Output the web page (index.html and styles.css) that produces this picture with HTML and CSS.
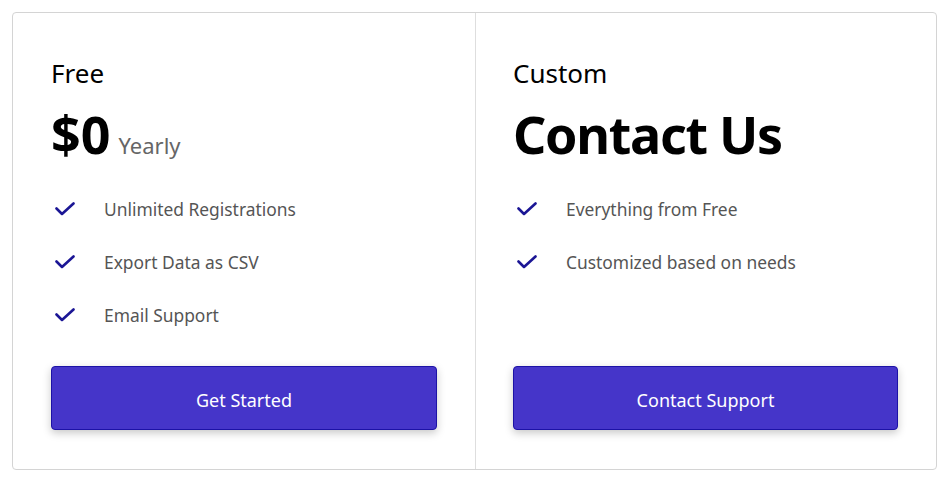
FILE: index.html
```html
<!DOCTYPE html>
<html lang="en">
<head>
<meta charset="utf-8">
<title>Pricing</title>
<link rel="stylesheet" href="styles.css">
</head>
<body>
<div class="pricing">
  <section class="plan">
    <h2 class="plan-name">Free</h2>
    <div class="price"><span class="amount">$0</span><span class="period">Yearly</span></div>
    <ul class="features">
      <li><svg class="check" viewBox="0 0 20 14" aria-hidden="true"><polyline points="1.5,6.5 7,12 18.5,1.5"/></svg><span>Unlimited Registrations</span></li>
      <li><svg class="check" viewBox="0 0 20 14" aria-hidden="true"><polyline points="1.5,6.5 7,12 18.5,1.5"/></svg><span>Export Data as CSV</span></li>
      <li><svg class="check" viewBox="0 0 20 14" aria-hidden="true"><polyline points="1.5,6.5 7,12 18.5,1.5"/></svg><span>Email Support</span></li>
    </ul>
    <button class="btn">Get Started</button>
  </section>
  <section class="plan">
    <h2 class="plan-name">Custom</h2>
    <div class="price"><span class="amount">Contact Us</span></div>
    <ul class="features">
      <li><svg class="check" viewBox="0 0 20 14" aria-hidden="true"><polyline points="1.5,6.5 7,12 18.5,1.5"/></svg><span>Everything from Free</span></li>
      <li><svg class="check" viewBox="0 0 20 14" aria-hidden="true"><polyline points="1.5,6.5 7,12 18.5,1.5"/></svg><span>Customized based on needs</span></li>
    </ul>
    <button class="btn">Contact Support</button>
  </section>
</div>
</body>
</html>
```
FILE: styles.css
```css
* { box-sizing: border-box; }
html, body { margin: 0; background: #fff; }
body {
  padding: 12px;
  font-family: "Noto Sans", "Open Sans", sans-serif;
  color: #000;
}
.pricing {
  width: 925px;
  height: 458px;
  display: grid;
  grid-template-columns: 462px 1fr;
  border: 1px solid #d4d4d4;
  border-radius: 4px;
}
.plan {
  display: flex;
  flex-direction: column;
  padding: 42px 38px 39px;
}
.plan + .plan {
  border-left: 1px solid #dedede;
  padding-left: 37px;
}
.plan-name {
  margin: 0;
  font-size: 26px;
  font-weight: 400;
  line-height: 36px;
}
.price {
  display: flex;
  align-items: baseline;
  margin-top: 8px;
  height: 70px;
}
.amount {
  font-size: 52px;
  font-weight: 700;
  line-height: 70px;
  letter-spacing: -1.3px;
}
.price .amount:not(:only-child) {
  letter-spacing: 0;
}
.period {
  font-size: 22px;
  color: #666;
  margin-left: 8px;
}
.features {
  list-style: none;
  margin: 13px 0 0;
  padding: 0;
  flex: 1;
}
.features li {
  display: flex;
  align-items: center;
  height: 53px;
  font-size: 17.4px;
  color: #555;
}
.check {
  width: 20px;
  height: 14px;
  margin: 0 29px 0 4px;
  fill: none;
  stroke: #1b1695;
  stroke-width: 2.6;
  stroke-linecap: round;
  stroke-linejoin: round;
}
.btn {
  height: 64px;
  width: 100%;
  padding: 4px 0 0;
  background: #4535c9;
  border: 1px solid #1c12a6;
  border-radius: 4px;
  color: #fff;
  font-family: inherit;
  font-size: 18px;
  box-shadow: 0 3px 8px rgba(0, 0, 0, 0.22);
  cursor: pointer;
}
```
